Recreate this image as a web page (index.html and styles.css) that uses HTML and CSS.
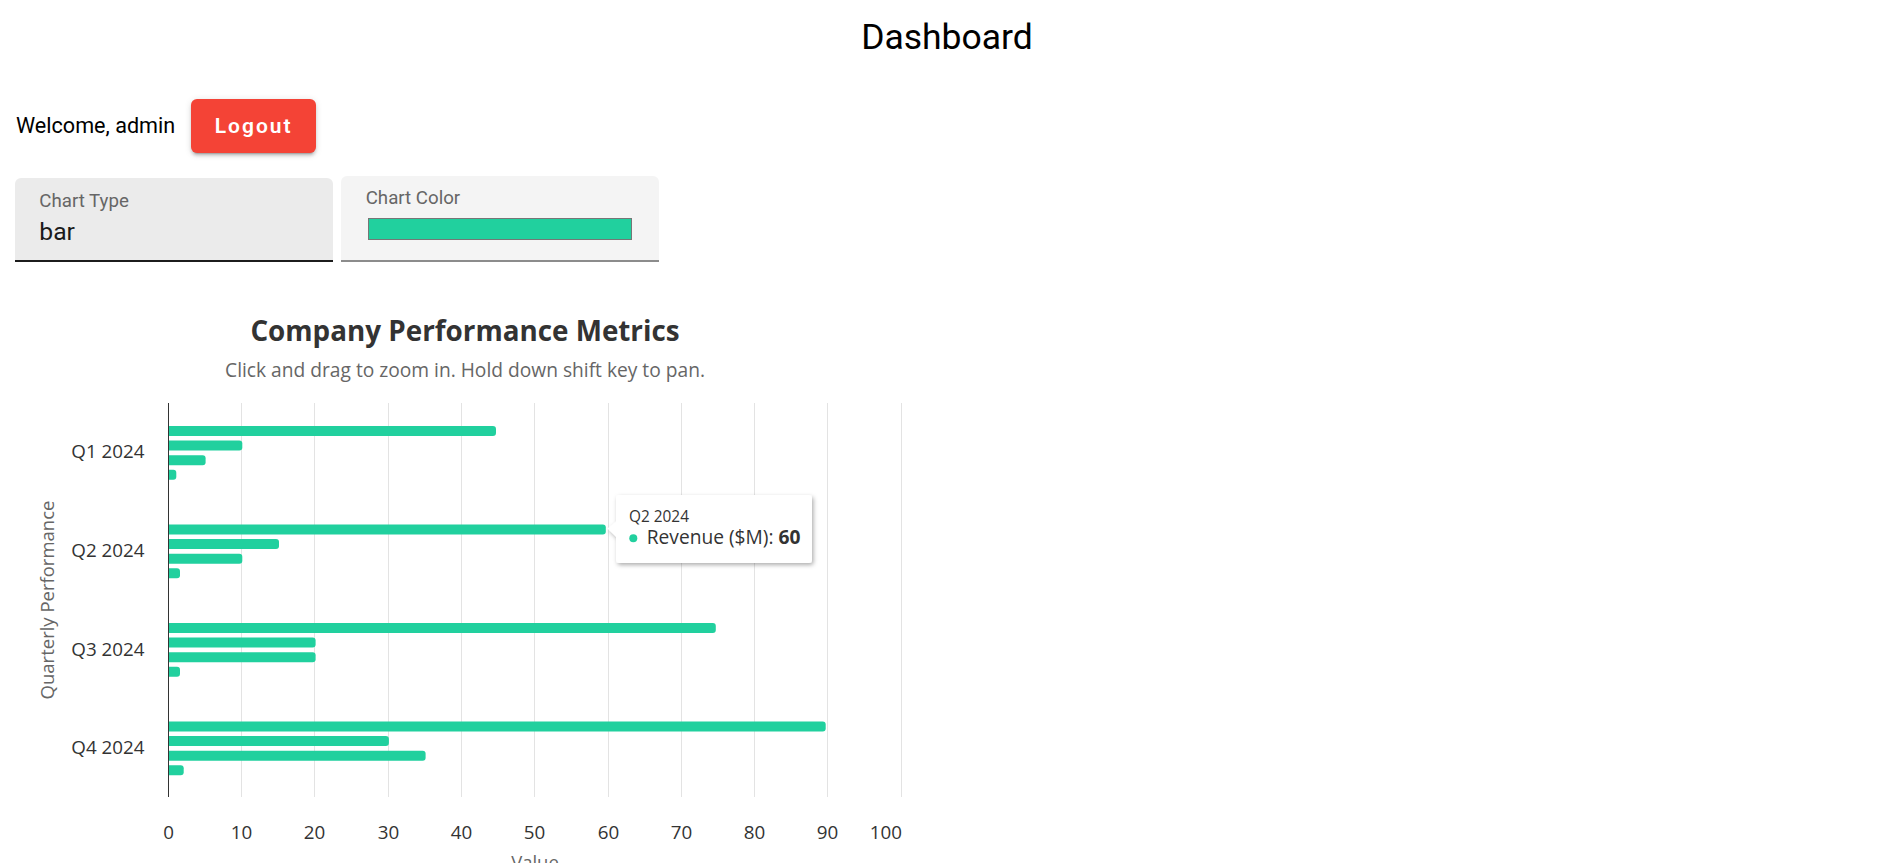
FILE: index.html
```html
<!DOCTYPE html>
<html lang="en">
<head>
<meta charset="utf-8">
<title>Dashboard</title>
<link rel="stylesheet" href="styles.css">
</head>
<body>
<div class="page">
  <h1 class="title">Dashboard</h1>
  <div class="user-row">
    <span class="welcome">Welcome, admin</span>
    <button class="logout" type="button">Logout</button>
  </div>
  <div class="fields">
    <div class="field field-type">
      <div class="field-label">Chart Type</div>
      <div class="field-value">bar</div>
    </div>
    <div class="field field-color">
      <div class="field-label">Chart Color</div>
      <div class="swatch"></div>
    </div>
  </div>
  <svg class="chart" width="900" height="583" viewBox="0 0 900 583" xmlns="http://www.w3.org/2000/svg">
    <defs>
      <filter id="tipShadow" x="-20%" y="-30%" width="150%" height="170%">
        <feDropShadow dx="1.5" dy="2" stdDeviation="2.2" flood-color="#000" flood-opacity="0.32"/>
      </filter>
    </defs>
    <text class="c-title" x="450" y="60.7" text-anchor="middle">Company Performance Metrics</text>
    <text class="c-sub" x="450" y="97.3" text-anchor="middle">Click and drag to zoom in. Hold down shift key to pan.</text>

    <g class="grid">
      <line x1="226.5" y1="123" x2="226.5" y2="517"/>
      <line x1="299.5" y1="123" x2="299.5" y2="517"/>
      <line x1="373.5" y1="123" x2="373.5" y2="517"/>
      <line x1="446.5" y1="123" x2="446.5" y2="517"/>
      <line x1="519.5" y1="123" x2="519.5" y2="517"/>
      <line x1="593.5" y1="123" x2="593.5" y2="517"/>
      <line x1="666.5" y1="123" x2="666.5" y2="517"/>
      <line x1="739.5" y1="123" x2="739.5" y2="517"/>
      <line x1="812.5" y1="123" x2="812.5" y2="517"/>
      <line x1="886.5" y1="123" x2="886.5" y2="517"/>
    </g>

    <g class="bars">
      <!-- Q1: 45, 10, 5, 1 -->
      <path d="M154 146 H477.9 Q481 146 481 149 V153 Q481 156 477.9 156 H154 Z"/>
      <path d="M154 160.6 H224.3 Q227.3 160.6 227.3 163.6 V167.6 Q227.3 170.6 224.3 170.6 H154 Z"/>
      <path d="M154 175.2 H187.6 Q190.6 175.2 190.6 178.2 V182.2 Q190.6 185.2 187.6 185.2 H154 Z"/>
      <path d="M154 189.8 H158.3 Q161.3 189.8 161.3 192.8 V196.8 Q161.3 199.8 158.3 199.8 H154 Z"/>
      <!-- Q2: 60, 15, 10, 1.5 -->
      <path d="M154 244.5 H587.8 Q590.8 244.5 590.8 247.5 V251.5 Q590.8 254.5 587.8 254.5 H154 Z"/>
      <path d="M154 259.1 H261 Q264 259.1 264 262.1 V266.1 Q264 269.1 261 269.1 H154 Z"/>
      <path d="M154 273.7 H224.3 Q227.3 273.7 227.3 276.7 V280.7 Q227.3 283.7 224.3 283.7 H154 Z"/>
      <path d="M154 288.3 H162 Q165 288.3 165 291.3 V295.3 Q165 298.3 162 298.3 H154 Z"/>
      <!-- Q3: 75, 20, 20, 1.5 -->
      <path d="M154 343 H697.8 Q700.8 343 700.8 346 V350 Q700.8 353 697.8 353 H154 Z"/>
      <path d="M154 357.6 H297.6 Q300.6 357.6 300.6 360.6 V364.6 Q300.6 367.6 297.6 367.6 H154 Z"/>
      <path d="M154 372.2 H297.6 Q300.6 372.2 300.6 375.2 V379.2 Q300.6 382.2 297.6 382.2 H154 Z"/>
      <path d="M154 386.8 H162 Q165 386.8 165 389.8 V393.8 Q165 396.8 162 396.8 H154 Z"/>
      <!-- Q4: 90, 30, 35, 2 -->
      <path d="M154 441.5 H807.7 Q810.7 441.5 810.7 444.5 V448.5 Q810.7 451.5 807.7 451.5 H154 Z"/>
      <path d="M154 456.1 H370.9 Q373.9 456.1 373.9 459.1 V463.1 Q373.9 466.1 370.9 466.1 H154 Z"/>
      <path d="M154 470.7 H407.6 Q410.6 470.7 410.6 473.7 V477.7 Q410.6 480.7 407.6 480.7 H154 Z"/>
      <path d="M154 485.3 H165.7 Q168.7 485.3 168.7 488.3 V492.3 Q168.7 495.3 165.7 495.3 H154 Z"/>
    </g>

    <line class="axis" x1="153.5" y1="123" x2="153.5" y2="517"/>

    <g class="ylabels">
      <text x="129.5" y="178.3" text-anchor="end">Q1 2024</text>
      <text x="129.5" y="276.7" text-anchor="end">Q2 2024</text>
      <text x="129.5" y="375.5" text-anchor="end">Q3 2024</text>
      <text x="129.5" y="473.5" text-anchor="end">Q4 2024</text>
    </g>
    <text class="axis-title" transform="translate(39 320) rotate(-90)" text-anchor="middle">Quarterly Performance</text>

    <g class="xlabels">
      <text x="153.5" y="559.3" text-anchor="middle">0</text>
      <text x="226.5" y="559.3" text-anchor="middle">10</text>
      <text x="299.5" y="559.3" text-anchor="middle">20</text>
      <text x="373.5" y="559.3" text-anchor="middle">30</text>
      <text x="446.5" y="559.3" text-anchor="middle">40</text>
      <text x="519.5" y="559.3" text-anchor="middle">50</text>
      <text x="593.5" y="559.3" text-anchor="middle">60</text>
      <text x="666.5" y="559.3" text-anchor="middle">70</text>
      <text x="739.5" y="559.3" text-anchor="middle">80</text>
      <text x="812.5" y="559.3" text-anchor="middle">90</text>
      <text x="887" y="559.3" text-anchor="end">100</text>
    </g>
    <text class="axis-title" x="520" y="589" text-anchor="middle">Value</text>

    <g class="tooltip">
      <path class="tip-box" filter="url(#tipShadow)" d="M604 215 H794 Q797 215 797 218 V280 Q797 283 794 283 H604 Q601 283 601 280 V256.7 L592.5 248.5 L601 241.7 V218 Q601 215 604 215 Z"/>
      <text class="tip-head" x="614" y="242.3">Q2 2024</text>
      <circle class="tip-dot" cx="618.3" cy="258.3" r="4"/>
      <text class="tip-body" x="631.7" y="264.3">Revenue ($M): <tspan class="tip-val">60</tspan></text>
    </g>
  </svg>
</div>
</body>
</html>
```

FILE: styles.css
```css
html, body {
  margin: 0;
  padding: 0;
  background: #ffffff;
  overflow: hidden;
}

body {
  font-family: Roboto, "Liberation Sans", Arial, sans-serif;
  color: #000000;
}

.page {
  padding-left: 15px;
}

.title {
  margin: 0;
  padding-top: 16px;
  height: 42px;
  font-size: 35.5px;
  line-height: 42px;
  font-weight: 400;
  text-align: center;
}

.user-row {
  display: flex;
  align-items: center;
  gap: 16px;
  margin-top: 41px;
  height: 54px;
}

.welcome {
  font-size: 21.6px;
  line-height: 31.5px;
  margin-left: 1px;
}

.logout {
  width: 125px;
  height: 54px;
  border: none;
  border-radius: 6px;
  background: #f44336;
  color: #ffffff;
  font-family: Roboto, "Liberation Sans", Arial, sans-serif;
  font-size: 21px;
  font-weight: 600;
  letter-spacing: 2px;
  display: flex;
  align-items: center;
  justify-content: center;
  padding: 0;
  box-shadow: 0 4px 1.5px -3px rgba(0,0,0,0.2), 0 3px 3px 0 rgba(0,0,0,0.14), 0 1.5px 7.5px 0 rgba(0,0,0,0.12);
}

.fields {
  display: flex;
  align-items: flex-end;
  gap: 8px;
  margin-top: 23px;
}

.field {
  width: 318px;
  box-sizing: border-box;
  border-radius: 6px 6px 0 0;
}

.field-type {
  height: 84px;
  background: #ebebeb;
  border-bottom: 2px solid #1c1c1c;
  padding: 13.7px 0 0 24.3px;
}

.field-color {
  height: 86px;
  background: #f4f4f4;
  border-bottom: 2px solid #8c8c8c;
  padding: 13.4px 0 0 24.7px;
}

.field-label {
  font-size: 18.7px;
  line-height: 18.5px;
  color: #666666;
}

.field-value {
  margin-top: 10px;
  font-size: 24.7px;
  line-height: 24.5px;
  color: #1a1a1a;
}

.swatch {
  margin-top: 10.1px;
  margin-left: 2.6px;
  width: 264px;
  height: 22px;
  box-sizing: border-box;
  border: 1.5px solid #767676;
  background: #21d09e;
}

.chart {
  display: block;
  margin-top: 18px;
  font-family: "Open Sans", "Noto Sans", "Liberation Sans", sans-serif;
}

.c-title {
  font-size: 27.8px;
  font-weight: 700;
  fill: #333333;
}

.c-sub {
  font-size: 19.2px;
  fill: #666666;
}

.grid line {
  stroke: #e3e3e3;
  stroke-width: 1;
}

.axis {
  stroke: #333333;
  stroke-width: 1;
}

.bars path {
  fill: #21d09e;
}

.ylabels text,
.xlabels text {
  font-size: 18.8px;
  fill: #333333;
}

.axis-title {
  font-size: 18.5px;
  fill: #666666;
}

.tip-box {
  fill: #ffffff;
}

.tip-head {
  font-size: 15.4px;
  fill: #333333;
}

.tip-dot {
  fill: #21d09e;
}

.tip-body {
  font-size: 19.2px;
  fill: #333333;
}

.tip-val {
  font-weight: 700;
}
```
